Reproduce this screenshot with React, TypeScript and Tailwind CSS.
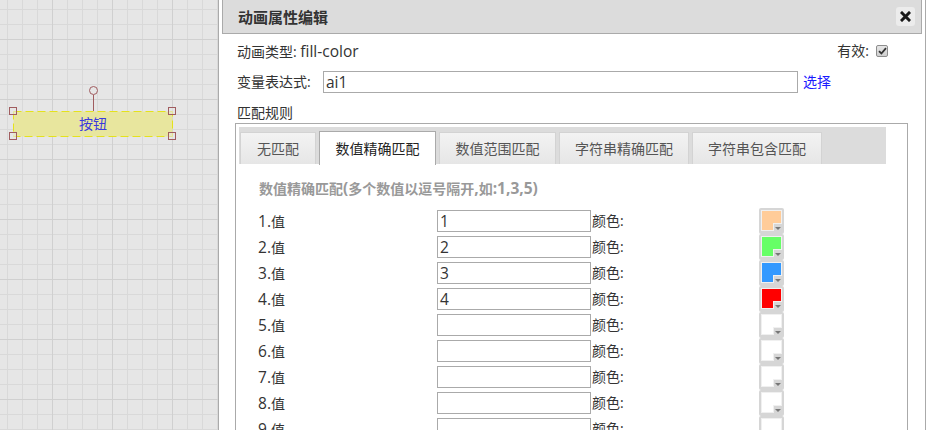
import React from 'react';

const TABS = [
  { label: '无匹配', w: 'w-[76px]' },
  { label: '数值精确匹配', w: 'w-[117px]', active: true },
  { label: '数值范围匹配', w: 'w-[117px]' },
  { label: '字符串精确匹配', w: 'w-[130px]' },
  { label: '字符串包含匹配', w: 'w-[130px]' },
];

const ROWS = [
  { n: 1, v: '1', fill: 'bg-[#ffcc99]' },
  { n: 2, v: '2', fill: 'bg-[#66ff66]' },
  { n: 3, v: '3', fill: 'bg-[#3399ff]' },
  { n: 4, v: '4', fill: 'bg-[#ff0000]' },
  { n: 5, v: '', fill: 'bg-white' },
  { n: 6, v: '', fill: 'bg-white' },
  { n: 7, v: '', fill: 'bg-white' },
  { n: 8, v: '', fill: 'bg-white' },
  { n: 9, v: '', fill: 'bg-white' },
];

// latin glyphs in the original font run a bit wider than the CJK ones
function L({ children }: { children: React.ReactNode }) {
  return <span className="text-[15.5px]">{children}</span>;
}

function Canvas() {
  const stroke = '#a05c5f';
  return (
    <div className="relative h-full w-[218px] shrink-0 bg-[#e6e6e6] bg-[linear-gradient(to_right,#d0d0d0_1px,transparent_1px),linear-gradient(to_bottom,#d0d0d0_1px,transparent_1px),linear-gradient(to_right,#d9d9d9_1px,transparent_1px),linear-gradient(to_bottom,#d9d9d9_1px,transparent_1px)] bg-[size:60px_60px,60px_60px,15px_15px,15px_15px] bg-[position:52px_39px,52px_39px,7px_9px,7px_9px]">
      <svg className="absolute left-0 top-0" width="218" height="430" viewBox="0 0 218 430">
        <rect x="13.5" y="111.5" width="159" height="25" fill="#e8e69e" stroke="#e4e21c" strokeWidth="1" strokeDasharray="8 4" />
        <line x1="93.5" y1="95" x2="93.5" y2="111" stroke={stroke} strokeWidth="1" />
        <circle cx="93.5" cy="90.5" r="4" fill="none" stroke={stroke} strokeWidth="1" />
        {[
          [13, 111],
          [172, 111],
          [13, 136],
          [172, 136],
        ].map(([x, y], i) => (
          <rect key={i} x={x - 3.5} y={y - 3.5} width="7" height="7" fill="#e6e6e6" fillOpacity="0.6" stroke={stroke} strokeWidth="1" />
        ))}
      </svg>
      <div className="absolute left-[14px] top-[112px] flex h-[24px] w-[158px] items-center justify-center text-[14px] leading-[24px] text-[#3a3adf]">
        按钮
      </div>
    </div>
  );
}

function Checkbox() {
  return (
    <span className="ml-[7px] flex h-[12px] w-[12px] items-center justify-center rounded-[2px] border border-[#8d8d8d] bg-[linear-gradient(#e6e6e6,#cfcfcf)]">
      <svg width="9" height="8" viewBox="0 0 9 8">
        <path d="M1 4.2 L3.4 6.5 L8 1.2" fill="none" stroke="#333" strokeWidth="1.8" />
      </svg>
    </span>
  );
}

function Swatch({ fill }: { fill: string }) {
  return (
    <div className="relative h-[26px] w-[25px] rounded-[2px] bg-[#d6d6d6]">
      <div className={`absolute left-[2px] top-[2px] h-[21px] w-[21px] border border-[#f0f0f0] ${fill}`} />
      <div className="absolute bottom-[3px] right-[2px] flex h-[8px] w-[9px] items-center justify-center border-l border-t border-[#f0f0f0] bg-[#d6d6d6]">
        <span className="mt-[1px] h-0 w-0 border-x-[3px] border-t-[3px] border-x-transparent border-t-[#777]" />
      </div>
    </div>
  );
}

function Dialog() {
  return (
    <div className="flex h-full w-[708px] shrink-0 flex-col border-x border-[#aaa] bg-white px-[3px]">
      <div className="flex h-[34px] shrink-0 items-center justify-between border-x border-b border-[#aaa] bg-[#dcdcdc] pl-[15px] pr-[6px]">
        <span className="text-[15px] font-bold leading-[20px] text-[#333]">动画属性编辑</span>
        <span className="flex h-[19px] w-[19px] items-center justify-center rounded-[3px] bg-[#ececec]">
          <svg width="11" height="11" viewBox="0 0 11 11">
            <path d="M2 2 L9 9 M9 2 L2 9" stroke="#1a1a1a" strokeWidth="3" strokeLinecap="square" />
          </svg>
        </span>
      </div>

      <div className="pl-[13px]">
        <div className="ml-[2px] mt-[6px] flex h-[22px] w-[651px] items-center justify-between leading-[22px]">
          <span>
            动画类型: <L>fill-color</L>
          </span>
          <span className="flex items-center">
            有效:
            <Checkbox />
          </span>
        </div>

        <div className="ml-[2px] mt-[9px] flex h-[22px] items-center leading-[22px]">
          <span className="w-[86px]">变量表达式:</span>
          <div className="h-[22px] w-[475px] border border-[#aaa] px-[2px] leading-[20px]">
            <L>ai1</L>
          </div>
          <span className="ml-[5px] text-[#1a1aff]">选择</span>
        </div>

        <div className="ml-[2px] mt-[10px] h-[20px] leading-[20px]">匹配规则</div>

        <div className="h-[330px] w-[673px] border border-[#aaa]">
          <div className="ml-[3px] mt-[3px] flex h-[37px] w-[647px] items-start gap-[3px] bg-[#dcdcdc] pl-[1px] pt-[5px]">
            {TABS.map((t) =>
              t.active ? (
                <div
                  key={t.label}
                  className={`relative -mt-[1px] flex h-[34px] items-center justify-center border border-b-0 border-[#aaa] bg-white leading-[20px] text-[#222] ${t.w}`}
                >
                  {t.label}
                </div>
              ) : (
                <div
                  key={t.label}
                  className={`flex h-[32px] items-center justify-center border border-b-0 border-[#d3d3d3] bg-[linear-gradient(#f3f3f3,#e6e6e6)] leading-[20px] text-[#555] ${t.w}`}
                >
                  {t.label}
                </div>
              ),
            )}
          </div>

          <div className="pl-[22px]">
            <div className="mt-[14px] h-[20px] pl-[1px] font-bold leading-[20px] text-[#999]">
              数值精确匹配<L>(</L>多个数值以逗号隔开<L>,</L>如<L>:1,3,5)</L>
            </div>
            <div className="mt-[10px] flex flex-col">
              {ROWS.map((r) => (
                <div key={r.n} className="flex h-[26px] items-center">
                  <span className="w-[179px] leading-[20px]">
                    <L>{r.n}.</L>值
                  </span>
                  <div className="h-[22px] w-[154px] border border-[#aaa] px-[2px] leading-[20px]">
                    <L>{r.v}</L>
                  </div>
                  <span className="w-[168px] pl-[1px] leading-[20px]">颜色:</span>
                  <Swatch fill={r.fill} />
                </div>
              ))}
            </div>
          </div>
        </div>
      </div>
    </div>
  );
}

export default function App() {
  return (
    <div className="flex h-[430px] w-[926px] overflow-hidden bg-white font-['Open_Sans','Noto_Sans_CJK_SC',sans-serif] text-[14px] text-[#333]">
      <Canvas />
      <Dialog />
    </div>
  );
}
